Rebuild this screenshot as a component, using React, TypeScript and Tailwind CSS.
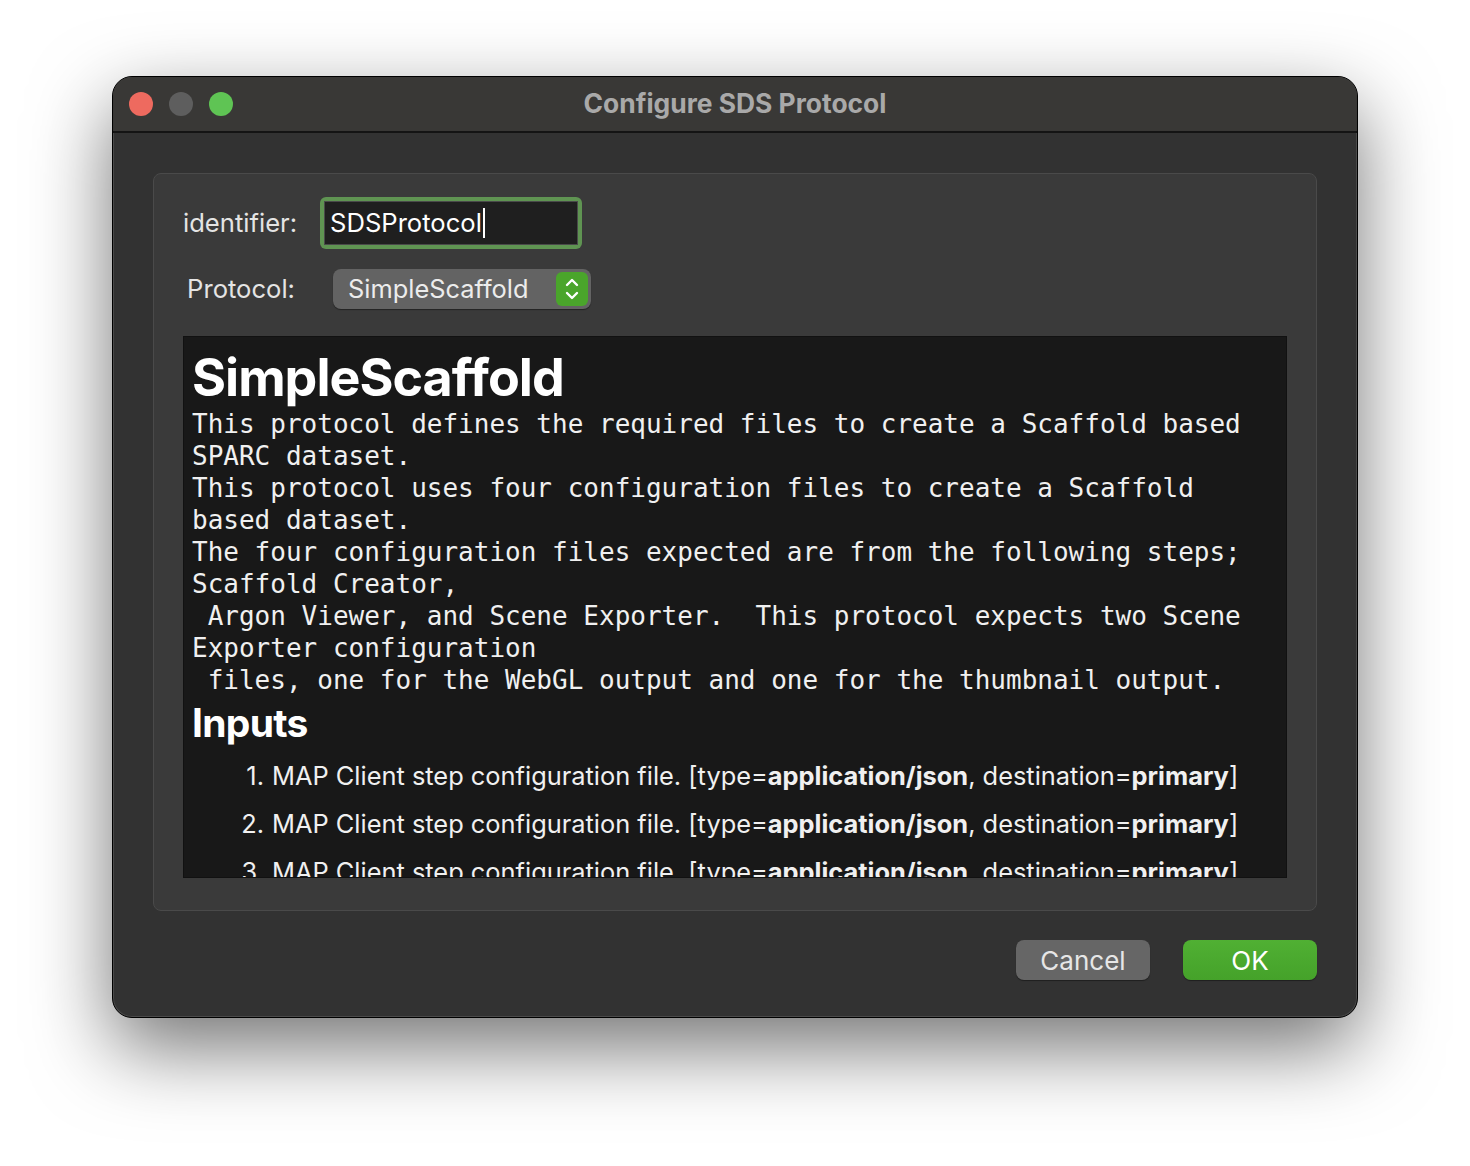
import { ReactNode } from "react";

const monoLines = [
  "This protocol defines the required files to create a Scaffold based",
  "SPARC dataset.",
  "This protocol uses four configuration files to create a Scaffold",
  "based dataset.",
  "The four configuration files expected are from the following steps;",
  "Scaffold Creator,",
  " Argon Viewer, and Scene Exporter.  This protocol expects two Scene",
  "Exporter configuration",
  " files, one for the WebGL output and one for the thumbnail output.",
];

function InputItem({ n }: { n: number }) {
  return (
    <li className="flex h-[48px] items-center">
      <span className="w-[80px] pr-[8px] text-right">{n}.</span>
      <span>
        MAP Client step configuration file. [type=<b>application/json</b>, destination=<b>primary</b>]
      </span>
    </li>
  );
}

function Dot({ className }: { className: string }) {
  return <div className={"h-[24px] w-[24px] rounded-full " + className} />;
}

function Row({ label, children }: { label: string; children: ReactNode }) {
  return (
    <div className="flex items-center">
      <div className="w-[112px] text-right text-[25.6px] text-[#e4e4e4]">{label}</div>
      {children}
    </div>
  );
}

export default function App() {
  return (
    <div className="flex min-h-screen justify-center bg-white pt-[76px] font-['Inter',sans-serif]">
      <div className="flex h-[942px] w-[1246px] flex-col overflow-hidden rounded-[20px] border border-black bg-[#323232] shadow-[0_30px_80px_rgba(0,0,0,0.55),inset_0_0_0_1px_rgba(255,255,255,0.12)]">
        {/* title bar */}
        <div className="relative flex h-[56px] shrink-0 items-center border-b-2 border-[#141414] bg-[#393836] px-[16px]">
          <div className="flex gap-[16px]">
            <Dot className="bg-[#ee6a5f]" />
            <Dot className="bg-[#5e5e5e]" />
            <Dot className="bg-[#5fc454]" />
          </div>
          <div className="absolute inset-0 flex items-center justify-center text-[26.4px] font-bold text-[#a9a9a9]">
            Configure SDS Protocol
          </div>
        </div>

        {/* body */}
        <div className="flex flex-1 flex-col px-[40px] pt-[40px]">
          <div className="flex h-[738px] flex-col rounded-[8px] border border-[#4a4a4a] bg-[#3a3a3a] px-[29px] pt-[23px]">
            <div className="flex flex-col gap-[20px]">
              <Row label="identifier:">
                <div className="ml-[25px] flex h-[52px] w-[262px] items-center rounded-[6px] bg-[#5f9452] p-[4px]">
                  <div className="flex h-full w-full items-center border border-[#4a4a4a] bg-[#1f1f1f] px-[5px] text-[25.6px] text-white">
                    SDSProtocol
                    <span className="ml-[1px] h-[30px] w-[2px] bg-white" />
                  </div>
                </div>
              </Row>
              <Row label="Protocol:">
                <div className="ml-[38px] flex h-[40px] w-[258px] items-center justify-between rounded-[8px] bg-[#636363] pl-[15px] pr-[3px] text-[25.4px] text-[#ececec] shadow-[0_1px_1px_rgba(0,0,0,0.4)]">
                  SimpleScaffold
                  <div className="flex h-[34px] w-[32px] items-center justify-center rounded-[6px] bg-[#4aa52b]">
                    <svg width="16" height="26" viewBox="0 0 16 26" fill="none" stroke="white" strokeWidth="2.4" strokeLinecap="round" strokeLinejoin="round">
                      <path d="M3 9 L8 4 L13 9" />
                      <path d="M3 17 L8 22 L13 17" />
                    </svg>
                  </div>
                </div>
              </Row>
            </div>

            {/* text browser */}
            <div className="mt-[27px] h-[542px] overflow-hidden border border-[#111] bg-[#181818] pl-[8px] pt-[11px] text-white">
              <h1 className="text-[52px] font-bold leading-[60px] tracking-[-1px]">SimpleScaffold</h1>
              <div className="whitespace-pre font-['DejaVu_Sans_Mono',monospace] text-[26px] leading-[32px] text-[#f0f0f0]">
                {monoLines.map((l, i) => (
                  <div key={i}>{l}</div>
                ))}
              </div>
              <h2 className="mt-[5px] text-[39px] font-bold leading-[44px] tracking-[-0.7px]">Inputs</h2>
              <ol className="mt-[7px] text-[25.4px] text-[#f0f0f0]">
                <InputItem n={1} />
                <InputItem n={2} />
                <InputItem n={3} />
              </ol>
            </div>
          </div>

          {/* buttons */}
          <div className="mt-[29px] flex justify-end gap-[33px]">
            <button className="h-[40px] w-[134px] rounded-[8px] bg-[#666666] text-[26px] text-[#e6e6e6] shadow-[0_1px_1px_rgba(0,0,0,0.4)]">
              Cancel
            </button>
            <button className="h-[40px] w-[134px] rounded-[8px] bg-gradient-to-b from-[#50b033] to-[#45a22a] text-[26px] text-white shadow-[0_1px_1px_rgba(0,0,0,0.4)]">
              OK
            </button>
          </div>
        </div>
      </div>
    </div>
  );
}
